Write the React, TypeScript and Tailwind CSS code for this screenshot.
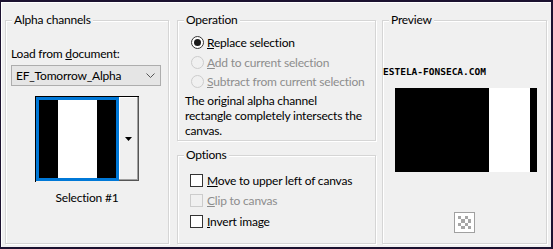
import React from "react";

const font = { fontFamily: 'Lato, "Noto Sans", "Liberation Sans", sans-serif', letterSpacing: "-0.2px" };

function Group({ title, className, children }: { title: string; className: string; children?: React.ReactNode }) {
  return (
    <div className={`relative border border-[#d5d5d5] shadow-[inset_1px_1px_0_#ffffff,1px_1px_0_#ffffff] ${className}`}>
      <div className="absolute left-[6px] top-[-9px] whitespace-nowrap bg-[#f0f0f0] px-[2px] text-[12px] leading-[16px] text-black">{title}</div>
      {children}
    </div>
  );
}

function Radio({ checked, disabled, children }: { checked?: boolean; disabled?: boolean; children: React.ReactNode }) {
  return (
    <div className="flex h-[19.5px] items-center whitespace-nowrap">
      <div
        className={`flex h-[13px] w-[13px] shrink-0 items-center justify-center rounded-full border ${
          disabled ? "border-[#cccccc] bg-[#f0f0f0]" : "border-[#333333] bg-white"
        }`}
      >
        {checked && <div className="h-[7px] w-[7px] rounded-full bg-[#1a1a1a]" />}
      </div>
      <span className={`ml-[3px] text-[12px] leading-[15px] ${disabled ? "text-[#8d8d8d]" : "text-black"}`}>{children}</span>
    </div>
  );
}

function Check({ disabled, children }: { disabled?: boolean; children: React.ReactNode }) {
  return (
    <div className="flex h-[20.5px] items-center whitespace-nowrap">
      <div className={`h-[13px] w-[13px] shrink-0 border ${disabled ? "border-[#cccccc] bg-[#f0f0f0]" : "border-[#333333] bg-white"}`} />
      <span className={`ml-[4px] text-[12px] leading-[15px] ${disabled ? "text-[#8d8d8d]" : "text-black"}`}>{children}</span>
    </div>
  );
}

export default function App() {
  return (
    <div className="h-[249px] w-[553px] bg-[#1c1230] pb-[2px] pl-[1px] pr-[2px] pt-[2px]" style={font}>
      <div className="flex h-full w-full gap-0 border-l border-t border-white bg-[#f0f0f0] pl-[3px] pt-[17px]">
        {/* Alpha channels */}
        <Group title="Alpha channels" className="h-[224px] w-[164px]">
          <div className="flex flex-col px-[5px] pt-[25px]">
            <div className="whitespace-nowrap text-[12px] leading-[15px] text-black">
              Load from <span className="underline">d</span>ocument:
            </div>
            <div className="mt-[4px] flex h-[21px] w-[150px] items-center justify-between border border-[#adadad] bg-[#e5e5e5] pl-[4px] pr-[5px]">
              <span className="text-[12px] leading-[15px] text-black">EF_Tomorrow_Alpha</span>
              <svg width="9" height="6" viewBox="0 0 9 6">
                <path d="M0.5 0.5 L4.5 4.5 L8.5 0.5" fill="none" stroke="#555" strokeWidth="1" />
              </svg>
            </div>
            <div className="mt-[10px] flex justify-center">
              <div className="flex h-[86px] w-[104px] border-l border-t border-black">
                <div className="h-[84px] w-[83px] border-[3px] border-[#0078d7] bg-black">
                  <div className="flex h-full w-full">
                    <div className="w-[19px] bg-black" />
                    <div className="w-[39px] bg-white" />
                    <div className="flex-1 bg-black" />
                  </div>
                </div>
                <div className="flex h-[84px] flex-1 items-center justify-center border-b border-r border-[#555] bg-[#f0f0f0] shadow-[inset_-1px_-1px_0_#a0a0a0,inset_1px_1px_0_#ffffff]">
                  <svg width="7" height="4" viewBox="0 0 7 4">
                    <path d="M0 0 L7 0 L3.5 4 Z" fill="#000" />
                  </svg>
                </div>
              </div>
            </div>
            <div className="mt-[8px] text-center text-[12px] leading-[15px] text-black">Selection #1</div>
          </div>
        </Group>

        {/* Middle column */}
        <div className="ml-[8px] flex w-[199px] flex-col">
          <Group title="Operation" className="h-[121px] w-[199px]">
            <div className="pl-[13px] pt-[12px]">
              <Radio checked>
                <span className="underline">R</span>eplace selection
              </Radio>
              <Radio disabled>
                <span className="underline">A</span>dd to current selection
              </Radio>
              <Radio disabled>
                <span className="underline">S</span>ubtract from current selection
              </Radio>
            </div>
            <div className="whitespace-nowrap pl-[7px] pt-[1px] text-[12px] leading-[15px] text-black">
              The original alpha channel
              <br />
              rectangle completely intersects the
              <br />
              canvas.
            </div>
          </Group>
          <Group title="Options" className="mt-[14px] h-[89px] w-[199px]">
            <div className="pl-[12px] pt-[14px]">
              <Check>
                <span className="underline">M</span>ove to upper left of canvas
              </Check>
              <Check disabled>
                <span className="underline">C</span>lip to canvas
              </Check>
              <Check>
                <span className="underline">I</span>nvert image
              </Check>
            </div>
          </Group>
        </div>

        {/* Preview */}
        <Group title="Preview" className="ml-[6px] h-[224px] w-[165px]">
          <div className="flex flex-col">
            <div
              className="ml-[0px] mt-[46px] whitespace-nowrap text-[9.5px] font-bold leading-[10px] tracking-normal text-black"
              style={{ fontFamily: '"DejaVu Sans Mono", monospace' }}
            >
              ESTELA-FONSECA.COM
            </div>
            <div className="ml-[12px] mt-[11px] flex h-[84px] w-[142px]">
              <div className="w-[94px] bg-black" />
              <div className="w-[41px] bg-white" />
              <div className="flex-1 bg-black" />
            </div>
            <div className="mt-[40px] flex justify-center">
              <div className="h-[21px] w-[21px] border border-[#a0a0a0] bg-white p-[3px]">
                <div className="grid h-full w-full grid-cols-4 grid-rows-4">
                  {Array.from({ length: 16 }).map((_, i) => {
                    const r = Math.floor(i / 4);
                    const c = i % 4;
                    return <div key={i} className={(r + c) % 2 === 0 ? "bg-[#a6a6a6]" : "bg-white"} />;
                  })}
                </div>
              </div>
            </div>
          </div>
        </Group>
      </div>
    </div>
  );
}
